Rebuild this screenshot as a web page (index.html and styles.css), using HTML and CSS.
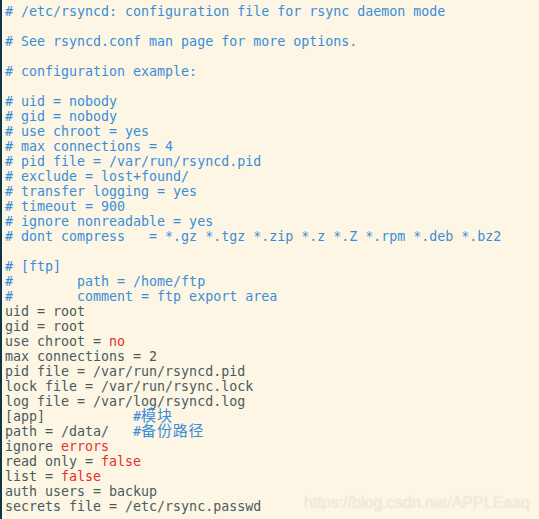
FILE: index.html
```html
<!DOCTYPE html>
<html>
<head>
<meta charset="utf-8">
<link rel="stylesheet" href="styles.css">
</head>
<body>
<div class="screen">
<pre class="code"><span class="c"># /etc/rsyncd: configuration file for rsync daemon mode</span>

<span class="c"># See rsyncd.conf man page for more options.</span>

<span class="c"># configuration example:</span>

<span class="c"># uid = nobody</span>
<span class="c"># gid = nobody</span>
<span class="c"># use chroot = yes</span>
<span class="c"># max connections = 4</span>
<span class="c"># pid file = /var/run/rsyncd.pid</span>
<span class="c"># exclude = lost+found/</span>
<span class="c"># transfer logging = yes</span>
<span class="c"># timeout = 900</span>
<span class="c"># ignore nonreadable = yes</span>
<span class="c"># dont compress   = *.gz *.tgz *.zip *.z *.Z *.rpm *.deb *.bz2</span>

<span class="c"># [ftp]</span>
<span class="c">#        path = /home/ftp</span>
<span class="c">#        comment = ftp export area</span>
uid = root
gid = root
use chroot = <span class="r">no</span>
max connections = 2
pid file = /var/run/rsyncd.pid
lock file = /var/run/rsync.lock
log file = /var/log/rsyncd.log
[app]           <span class="c">#<span class="cjk">模块</span></span>
path = /data/   <span class="c">#<span class="cjk">备份路径</span></span>
ignore <span class="r">errors</span>
read only = <span class="r">false</span>
list = <span class="r">false</span>
auth users = backup
secrets file = /etc/rsync.passwd</pre>
<div class="watermark">https://blog.csdn.net/APPLEaaq</div>
</div>
</body>
</html>
```
FILE: styles.css
```css
html, body {
  margin: 0;
  padding: 0;
}
body {
  width: 539px;
  height: 519px;
  overflow: hidden;
  background: #fdf6e3;
}
.screen {
  position: relative;
  box-sizing: border-box;
  width: 539px;
  height: 519px;
  background: #fdf6e4;
  border-left: 2px solid #0d3542;
  padding: 4px 0 0 3px;
}
.code {
  margin: 0;
  font-family: "DejaVu Sans Mono", monospace;
  font-size: 13.3px;
  line-height: 15px;
  color: #4a5a60;
}
.c {
  color: #3a8dd9;
}
.r {
  color: #e2302e;
}
.cjk {
  font-family: "Noto Sans CJK SC", sans-serif;
  font-size: 15px;
  letter-spacing: 0.8px;
  line-height: 0;
}
.watermark {
  position: absolute;
  right: 9px;
  bottom: 7px;
  font-family: "Liberation Sans", Arial, sans-serif;
  font-size: 16px;
  color: rgba(255, 255, 255, 0.55);
  text-shadow: 0 0 1px rgba(170, 160, 140, 0.45);
}
```
